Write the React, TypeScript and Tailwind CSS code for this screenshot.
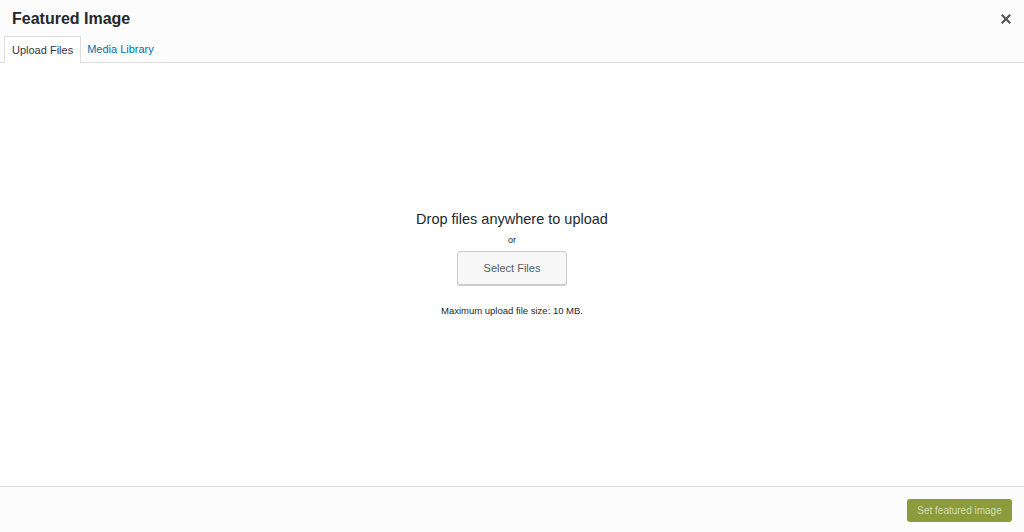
import React from "react";

export default function App() {
  return (
    <div
      className="flex h-[532px] w-[1024px] flex-col bg-white text-[#23282d]"
      style={{ fontFamily: "'Liberation Sans', Arial, sans-serif" }}
    >
      {/* Header */}
      <div className="relative bg-[#fcfcfc]">
        <div className="flex h-[37px] items-center px-[12px]">
          <h1 className="text-[16px] font-bold text-[#23282d]">
            Featured Image
          </h1>
        </div>
        <button className="absolute right-[10px] top-[10px] flex h-[17px] w-[17px] items-center justify-center text-[#555]">
          <svg width="10" height="10" viewBox="0 0 10 10">
            <path
              d="M1.5 1.5 L8.5 8.5 M8.5 1.5 L1.5 8.5"
              stroke="currentColor"
              strokeWidth="2.2"
              strokeLinecap="square"
            />
          </svg>
        </button>

        {/* Tabs */}
        <div className="flex h-[26px] items-end border-b border-[#dddddd] pl-[4px]">
          <div className="-mb-px flex h-[27px] items-center border border-b-0 border-[#dddddd] bg-white px-[7px] text-[11px] text-[#32373c]">
            Upload Files
          </div>
          <div className="flex h-[26px] items-center px-[6px] text-[11px] text-[#0073aa]">
            Media Library
          </div>
        </div>
      </div>

      {/* Upload area */}
      <div className="flex flex-1 flex-col items-center pt-[146px]">
        <p className="text-[14.5px] leading-[20px] text-[#23282d]">
          Drop files anywhere to upload
        </p>
        <p className="mt-[5px] text-[9px] leading-[12px] text-[#23282d]">or</p>
        <button className="mt-[5px] flex h-[34px] w-[110px] items-center justify-center rounded-[3px] border border-[#cccccc] bg-[#f7f7f7] text-[11px] text-[#555d66] shadow-[0_1px_0_#cccccc]">
          Select Files
        </button>
        <p className="mt-[20px] text-[9.5px] leading-[12px] text-[#23282d]">
          Maximum upload file size: 10 MB.
        </p>
      </div>

      {/* Footer */}
      <div className="flex h-[46px] items-center justify-end border-t border-[#dddddd] bg-[#fcfcfc] pr-[12px]">
        <button className="mt-[2px] flex h-[23px] w-[105px] items-center justify-center rounded-[3px] bg-[#8c9c3c] text-[10px] text-[#d3dbb0]">
          Set featured image
        </button>
      </div>
    </div>
  );
}
